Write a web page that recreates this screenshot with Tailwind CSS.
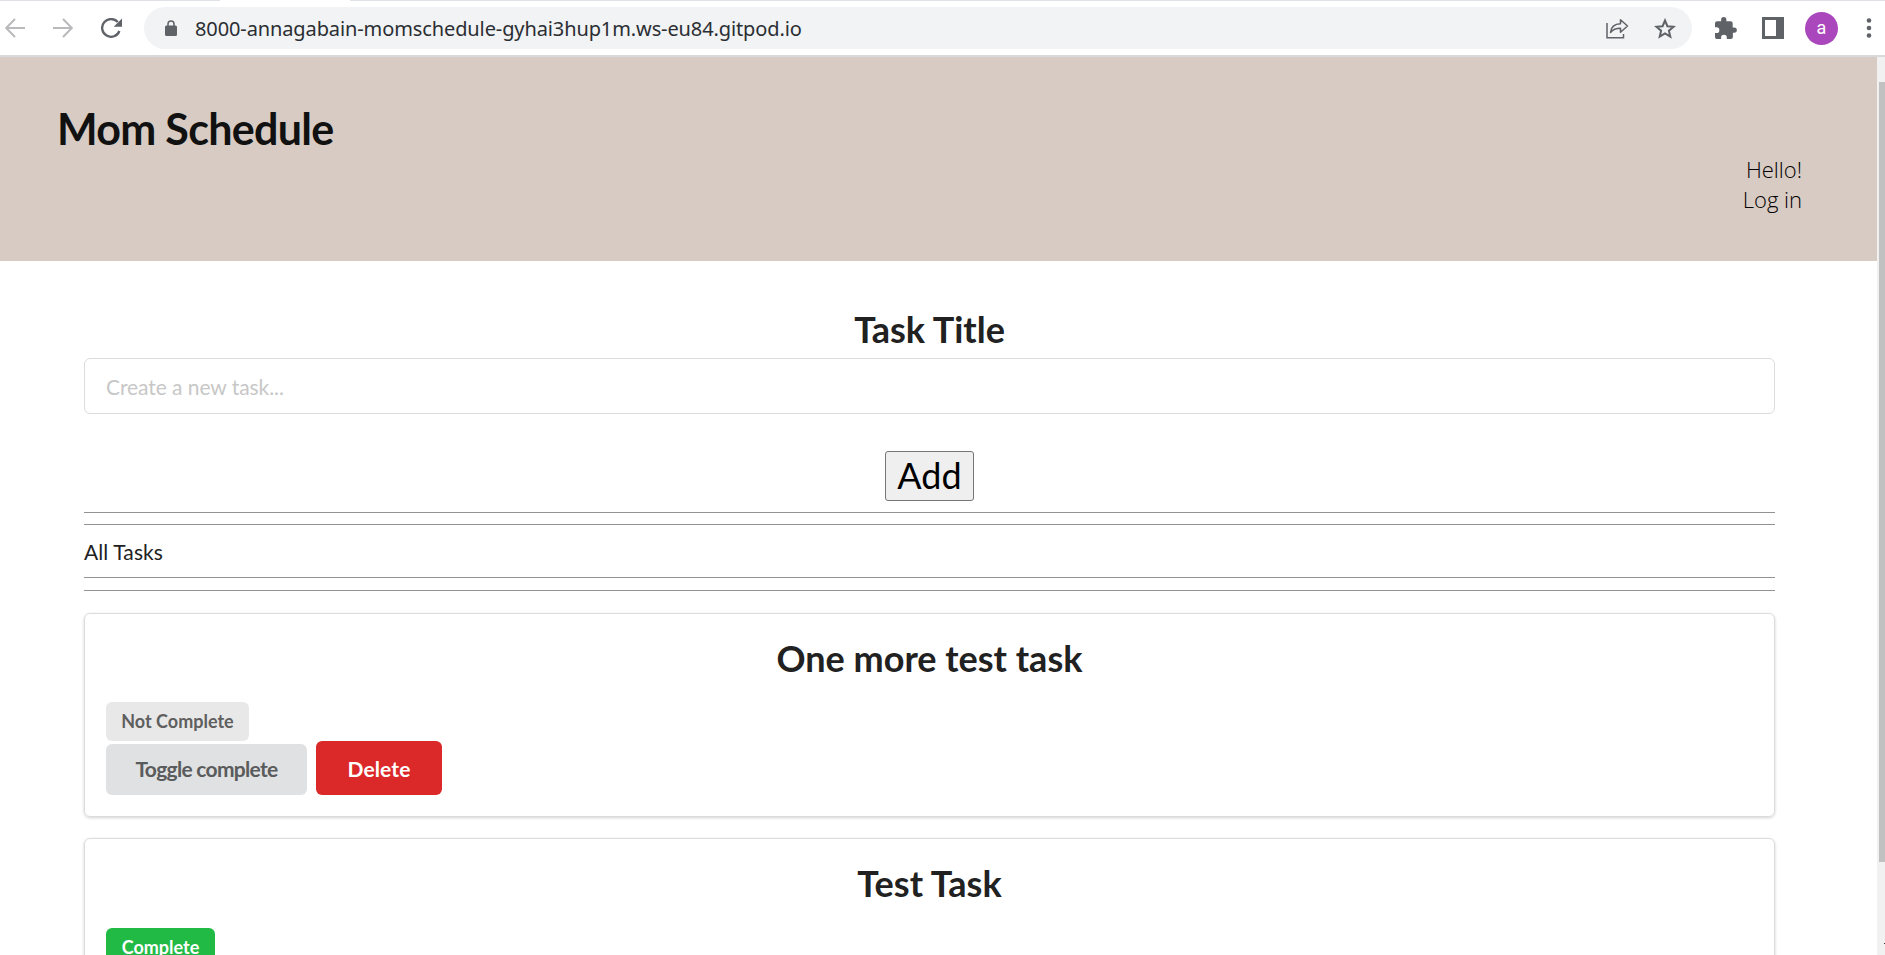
<!DOCTYPE html>
<html lang="en">
<head>
<meta charset="utf-8">
<title>Mom Schedule</title>
<script src="https://cdn.jsdelivr.net/npm/@tailwindcss/browser@4"></script>
</head>
<body class="h-[955px] w-[1885px] overflow-hidden bg-white font-[Lato,sans-serif] text-[#212121]">
<div class="flex h-[955px] flex-col overflow-hidden">
  <!-- Browser toolbar -->
  <div class="flex h-[57px] shrink-0 items-start border-b-2 border-[#d9d9db] bg-white">
    <div class="flex h-[55px] w-full flex-col">
      <div class="flex h-px"><div class="w-[220px] bg-[#dee1e6]"></div><div class="w-[130px]"></div><div class="flex-1 bg-[#dee1e6]"></div></div>
      <div class="flex h-[54px] items-center">
        <svg class="ml-[5px] h-5 w-5 shrink-0" viewBox="0 0 20 20" fill="none" stroke="#bababc" stroke-width="2"><path d="M20 10H1.5M10 1 1.2 10 10 19"/></svg>
        <svg class="ml-7 h-5 w-5 shrink-0" viewBox="0 0 20 20" fill="none" stroke="#bababc" stroke-width="2"><path d="M0 10h18.5M10 1l8.8 9L10 19"/></svg>
        <svg class="ml-[28px] h-5 w-[21px] shrink-0" viewBox="0 0 21 20"><path d="M16.8 4.1A8.9 8.9 0 1 0 18.4 13" fill="none" stroke="#5f6368" stroke-width="2.3"/><path d="M21 .5v8.3h-8.3z" fill="#5f6368"/></svg>
        <div class="ml-[22px] flex h-[42px] w-[1548px] shrink-0 items-center rounded-full bg-[#f1f3f4]">
          <svg class="ml-[21px] h-4 w-3 shrink-0" viewBox="0 0 12 16"><path d="M3 6.5V4a3 3 0 0 1 6 0v2.500" fill="none" stroke="#5f6368" stroke-width="1.5"/><rect y="5.500" width="12" height="10.500" rx="1.500" fill="#5f6368"/></svg>
          <span class="ml-[18px] pt-px font-['Noto_Sans'] text-[20px] leading-[28px] tracking-[-0.11px] whitespace-nowrap text-[#2b2e33]">8000-annagabain-momschedule-gyhai3hup1m.ws-eu84.gitpod.io</span>
          <svg class="mr-[25px] ml-auto h-[21px] w-6 shrink-0" viewBox="0 0 24 21" fill="none" stroke="#5f6368" stroke-width="1.500"><path d="M2 5v14.800h16.500V16"/><path d="M5.500 14.500C6 9 9.500 6 15.500 5.800V1.700L22.500 8l-7 6.200V10.300C11 10.200 8 11.500 5.500 14.500z" stroke-linejoin="round"/></svg>
          <svg class="mr-4 h-[21px] w-[22px] shrink-0" viewBox="0 0 22 21" fill="none" stroke="#5f6368" stroke-width="2"><path d="M11 2.500l2.400 5.700 6.200.5-4.700 4 1.400 6L11 15.500l-5.300 3.200 1.400-6-4.700-4 6.200-.5z"/></svg>
        </div>
        <svg class="ml-[23px] h-[22px] w-[22px] shrink-0" viewBox="0 0 22 22" fill="#5f6368"><path d="M19.200 10.500h-1.500V6.300a2.100 2.100 0 0 0-2.100-2.100h-4.200V2.700a2.650 2.650 0 0 0-5.300 0v1.500H2.100A2.100 2.100 0 0 0 0 6.300v4h1.500a2.850 2.850 0 0 1 0 5.700H0v4a2 2 0 0 0 2.100 2h4v-1.500a2.850 2.850 0 0 1 5.700 0V22h4a2.100 2.100 0 0 0 2.100-2.100v-4.200h1.300a2.650 2.650 0 0 0 0-5.300z"/></svg>
        <div class="ml-[25px] h-[22px] w-[22px] shrink-0 border-[3px] border-r-8 border-[#5f6368]"></div>
        <div class="ml-[21px] flex h-[33px] w-[33px] shrink-0 items-center justify-center rounded-full bg-[#ab47bc] pb-px font-[Roboto] text-[18px] text-white">a</div>
        <svg class="ml-[28px] h-5 w-[6px] shrink-0" viewBox="0 0 6 20" fill="#5f6368"><circle cx="3" cy="2.500" r="2.300"/><circle cx="3" cy="10" r="2.300"/><circle cx="3" cy="17.500" r="2.300"/></svg>
      </div>
    </div>
  </div>
  <!-- Page -->
  <div class="flex flex-1 overflow-hidden">
    <div class="w-[1877px] shrink-0">
      <header class="flex h-[204px] flex-col bg-[#d8cbc3]">
        <h1 class="mt-[45px] ml-[57px] text-[43px] leading-[54px] font-bold tracking-[-0.7px] whitespace-nowrap text-[#111]">Mom Schedule</h1>
        <div class="-mt-0.5 mr-[75px] text-right font-['Open_Sans'] text-[22px] leading-[30px] font-light text-black"><p>Hello!</p><p>Log in</p></div>
      </header>
      <main class="flex flex-col pr-[102px] pl-[84px]">
        <h2 class="mt-[45px] text-center text-[36px] leading-[46px] font-bold">Task Title</h2>
        <div class="mt-[6px] flex h-[56px] items-center rounded-md border border-[#dbdcdd] px-[21px] pt-px text-[21px] leading-[26px] tracking-[-0.06px] text-[#c7c7c7]">Create a new task...</div>
        <button class="mt-[37px] h-[50px] w-[89px] self-center rounded-[3px] border border-[#767676] bg-[#efefef] pb-0.5 text-[36px] leading-[46px] text-black">Add</button>
        <div class="mt-[11px] h-[13px] border-t border-b border-[#939393]"></div>
        <p class="mt-[13px] h-[39px] text-[21px] leading-[28px] tracking-[0.1px]">All Tasks</p>
        <div class="h-[14px] border-t border-b border-[#939393]"></div>
        <section class="mt-[22px] flex h-[204px] flex-col rounded-md border border-[#dbdcdd] px-[21px] shadow-[0_1px_3px_rgba(34,36,38,0.2)]">
          <h2 class="mt-[21px] h-[67px] text-center text-[36px] leading-[46px] font-bold">One more test task</h2>
          <div class="flex h-[39px] w-[143px] shrink-0 items-center justify-center rounded-md bg-[#e8e8e8] text-[18px] font-bold text-[#5f5f5f]">Not Complete</div>
          <div class="flex items-end gap-[9px]">
            <div class="flex h-[51px] w-[201px] items-center justify-center rounded-md bg-[#e0e1e2] pb-px text-[21px] font-bold tracking-[-0.7px] text-[#5a5b5c]">Toggle complete</div>
            <div class="flex h-[54px] w-[126px] items-center justify-center rounded-md bg-[#db2828] pt-px text-[21px] font-bold tracking-[0.1px] text-white">Delete</div>
          </div>
        </section>
        <section class="mt-[21px] flex h-[204px] flex-col rounded-md border border-[#dbdcdd] px-[21px] shadow-[0_1px_3px_rgba(34,36,38,0.2)]">
          <h2 class="mt-[21px] h-[68px] text-center text-[36px] leading-[46px] font-bold">Test Task</h2>
          <div class="flex h-[39px] w-[109px] shrink-0 items-center justify-center rounded-md bg-[#21ba45] pb-px text-[18px] font-bold text-white">Complete</div>
        </section>
      </main>
    </div>
    <!-- Scrollbar -->
    <div class="flex w-2 flex-col items-end bg-[#f1f1f1] pt-[25px]">
      <div class="h-[780px] w-[6px] bg-[#c1c1c1]"></div>
      <div class="mt-[81px] h-px w-px bg-[#333]"></div>
    </div>
  </div>
</div>
</body>
</html>
